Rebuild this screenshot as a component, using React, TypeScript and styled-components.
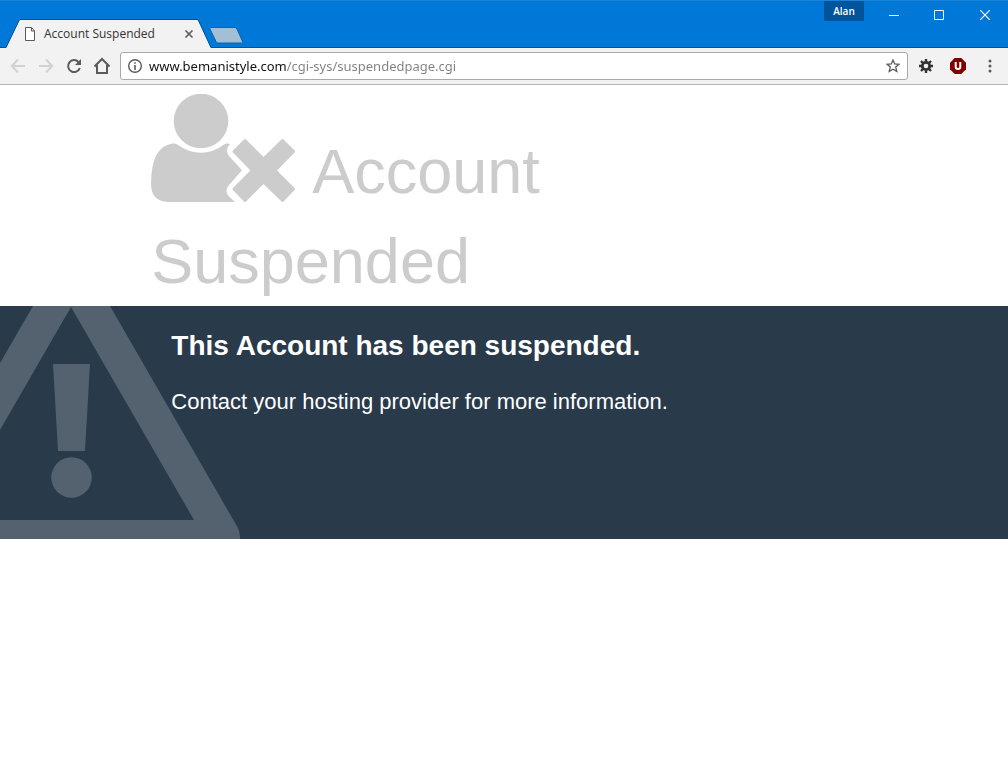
import React from "react";
import styled, { createGlobalStyle } from "styled-components";

const GlobalStyle = createGlobalStyle`
  *, *::before, *::after { box-sizing: border-box; }
  body {
    margin: 0;
    background: #fff;
    font-family: "Liberation Sans", Arial, sans-serif;
  }
`;

const uiFont = `"Open Sans", "Segoe UI", sans-serif`;

const TitleBar = styled.header`
  display: flex;
  justify-content: space-between;
  align-items: flex-start;
  height: 48px;
  background: #0078d7;
  border-top: 1px solid #1883d7;
  border-bottom: 1px solid #005499;
  font-family: ${uiFont};
`;

const TabStrip = styled.div`
  display: flex;
  align-items: flex-end;
  height: 47px;
  padding-left: 6px;
`;

const Tab = styled.div`
  position: relative;
  display: flex;
  align-items: center;
  width: 206px;
  height: 29px;
  padding: 0 16px 0 18px;
  color: #333;
  font-size: 12px;
  line-height: 16px;
`;

const TabShape = styled.svg`
  position: absolute;
  inset: 0;
  z-index: 0;
`;

const TabTitle = styled.span`
  position: relative;
  flex: 1;
  padding-left: 8px;
  white-space: nowrap;
`;

const IconButton = styled.button<{ $w?: number; $h?: number }>`
  position: relative;
  display: grid;
  place-items: center;
  flex: none;
  width: ${(p) => p.$w ?? 28}px;
  height: ${(p) => p.$h ?? 28}px;
  padding: 0;
  border: 0;
  background: none;
`;

const Glyph = styled.svg`
  position: relative;
  display: block;
  flex: none;
`;

const NewTab = styled(IconButton)`
  margin-bottom: 4px;
  margin-left: -4px;
`;

const WindowControls = styled.div`
  display: flex;
  align-items: flex-start;
`;

const Profile = styled.button`
  width: 40px;
  height: 20px;
  padding: 0;
  margin-right: 7px;
  border: 0;
  background: #00549a;
  color: #fff;
  font-family: ${uiFont};
  font-size: 10px;
  font-weight: 600;
  line-height: 20px;
`;

const Toolbar = styled.nav`
  display: flex;
  align-items: center;
  height: 37px;
  padding: 0 2px 0 4px;
  background: #f2f2f2;
  border-bottom: 1px solid #b6b6b6;
`;

const AddressBar = styled.label`
  display: flex;
  flex: 1;
  align-items: center;
  min-width: 0;
  height: 28px;
  margin: 0 2px 0 4px;
  padding-left: 7px;
  background: #fff;
  border: 1px solid #a9a9a9;
  border-radius: 3px;
`;

const AddressInput = styled.input`
  flex: 1;
  min-width: 0;
  height: 24px;
  margin-left: 7px;
  padding: 0;
  border: 0;
  outline: 0;
  background: linear-gradient(90deg, #111 138px, #808080 138px);
  background-clip: text;
  -webkit-background-clip: text;
  -webkit-text-fill-color: transparent;
  caret-color: #111;
  font-family: "Noto Sans", "Segoe UI", sans-serif;
  font-size: 13px;
  line-height: 24px;
`;

const Intro = styled.section`
  padding: 9px 15% 0;
`;

const Title = styled.h1`
  margin: 0;
  color: #ccc;
  font-size: 63px;
  font-weight: 400;
  line-height: 90px;
`;

const UserIcon = styled.svg`
  width: 144px;
  height: 108px;
  margin-right: 3px;
  vertical-align: -9px;
`;

const Banner = styled.section`
  position: relative;
  min-height: 233px;
  padding: 20px 15% 20px 17%;
  overflow: hidden;
  background: #293a4a;
  color: #fff;
`;

const WarningSign = styled.svg`
  position: absolute;
  left: 0;
  top: 0;
`;

const Heading = styled.h2`
  position: relative;
  margin: 0;
  font-size: 28px;
  line-height: 40px;
`;

const Message = styled.p`
  position: relative;
  margin: 20px 0 0;
  font-size: 22px;
  line-height: 32px;
`;

export default function App() {
  return (
    <>
      <GlobalStyle />
      <TitleBar>
        <TabStrip>
          <Tab>
            <TabShape width="206" height="29" aria-hidden="true">
              <path d="M0 29L13 2Q13.500 1 14.500 1H191Q192 1 192.500 2L205 29Z" fill="#f2f2f2" />
              <path d="M0 28.500L13 1.500Q13.300 .5 14.500 .5H191Q192 .5 192.500 1.500L205 28.500" fill="none" stroke="#00549a" />
            </TabShape>
            <Glyph width="12" height="14" viewBox="0 0 12 14" fill="#fff" stroke="#5a5a5a" aria-hidden="true">
              <path d="M1.500 .5H7.500L10.500 4V13.500H1.500Z M7.500 .5V4H10.500" />
            </Glyph>
            <TabTitle>Account Suspended</TabTitle>
            <IconButton $w={14} $h={14} aria-label="Close tab">
              <Glyph width="10" height="10" viewBox="0 0 10 10" stroke="#5a5a5a" strokeWidth="1.600">
                <path d="M1.500 1.500L8.500 8.500M8.500 1.500L1.500 8.500" />
              </Glyph>
            </IconButton>
          </Tab>
          <NewTab $w={36} $h={17} aria-label="New tab">
            <Glyph width="36" height="17" viewBox="0 0 36 17">
              <path d="M2.500 .5H27Q28.500 .5 29 2L34.500 14.500Q35 16 34 16H10Q8.500 16 8 14.500L2 2Q1.500 .5 2.500 .5Z" fill="#a4bed4" stroke="#0a64ae" />
            </Glyph>
          </NewTab>
        </TabStrip>
        <WindowControls>
          <Profile>Alan</Profile>
          <IconButton $w={45} aria-label="Minimize">
            <Glyph width="10" height="10"><path d="M0 5.500H10" stroke="#fff" /></Glyph>
          </IconButton>
          <IconButton $w={46} aria-label="Maximize">
            <Glyph width="10" height="10"><path d="M.5 .5H9.500V9.500H.5Z" fill="none" stroke="#fff" /></Glyph>
          </IconButton>
          <IconButton $w={46} aria-label="Close">
            <Glyph width="10" height="10"><path d="M0 0L10 10M10 0L0 10" stroke="#fff" strokeWidth="1.200" /></Glyph>
          </IconButton>
        </WindowControls>
      </TitleBar>
      <Toolbar>
        <IconButton aria-label="Back">
          <Glyph width="16" height="16" viewBox="0 0 16 16" fill="none" stroke="#d2d2d2" strokeWidth="2">
            <path d="M15 8H2M8 1.500L1.800 8L8 14.500" />
          </Glyph>
        </IconButton>
        <IconButton aria-label="Forward">
          <Glyph width="16" height="16" viewBox="0 0 16 16" fill="none" stroke="#d2d2d2" strokeWidth="2">
            <path d="M1 8H14M8 1.500L14.200 8L8 14.500" />
          </Glyph>
        </IconButton>
        <IconButton aria-label="Reload">
          <Glyph width="16" height="16" viewBox="0 0 16 16" fill="none" stroke="#5a5a5a" strokeWidth="2">
            <path d="M13.800 10A6 6 0 1 1 12.500 4" />
            <path d="M15 1V7H9Z" fill="#5a5a5a" stroke="none" />
          </Glyph>
        </IconButton>
        <IconButton aria-label="Home">
          <Glyph width="18" height="18" viewBox="0 0 18 18" fill="none" stroke="#5a5a5a" strokeWidth="2">
            <path d="M1.500 9.500L9 2L16.500 9.500M4 8V16H14V8" />
          </Glyph>
        </IconButton>
        <AddressBar>
          <Glyph width="14" height="14" viewBox="0 0 14 14" aria-hidden="true">
            <circle cx="7" cy="7" r="6.300" fill="none" stroke="#5a5a5a" strokeWidth="1.400" />
            <path d="M6.200 3.200H7.800V4.800H6.200ZM6.200 6H7.800V11H6.200Z" fill="#5a5a5a" />
          </Glyph>
          <AddressInput aria-label="Address" spellCheck={false} defaultValue="www.bemanistyle.com/cgi-sys/suspendedpage.cgi" />
          <IconButton aria-label="Bookmark this page">
            <Glyph width="14" height="14" viewBox="0 0 14 14" fill="none" stroke="#5a5a5a" strokeWidth="1.300">
              <path d="M7 1L8.700 5L13 5.300L9.700 8.100L10.800 12.500L7 10.200L3.200 12.500L4.300 8.100L1 5.300L5.300 5Z" />
            </Glyph>
          </IconButton>
        </AddressBar>
        <IconButton $w={32} aria-label="Settings extension">
          <Glyph width="14" height="14" viewBox="0 0 14 14" fill="none" stroke="#333">
            <circle cx="7" cy="7" r="3.700" strokeWidth="2.800" />
            <path d="M7 0V2.500M7 11.500V14M0 7H2.500M11.500 7H14M2 2L3.800 3.800M10.200 10.200L12 12M12 2L10.200 3.800M3.800 10.200L2 12" strokeWidth="2.400" />
          </Glyph>
        </IconButton>
        <IconButton $w={32} aria-label="uBlock">
          <Glyph width="16" height="16" viewBox="0 0 16 16">
            <path d="M4.700 0H11.300L16 4.700V11.300L11.300 16H4.700L0 11.300V4.700Z" fill="#800000" />
            <path d="M5.700 4V9Q5.700 11 8 11Q10.300 11 10.300 9V4" fill="none" stroke="#fff" strokeWidth="2" />
          </Glyph>
        </IconButton>
        <IconButton $w={32} aria-label="Menu">
          <Glyph width="4" height="14" viewBox="0 0 4 14" fill="#5a5a5a">
            <circle cx="2" cy="2" r="1.500" />
            <circle cx="2" cy="7" r="1.500" />
            <circle cx="2" cy="12" r="1.500" />
          </Glyph>
        </IconButton>
      </Toolbar>
      <main>
        <Intro>
          <Title>
            <UserIcon viewBox="0 0 144 108" fill="#ccc" aria-hidden="true">
              <circle cx="50" cy="27" r="27.300" />
              <path d="M22 49.500Q25 49 27 51Q38 58.800 50 58.800Q62 58.800 73 50.500Q76 49 79 50Q73.500 56 78 62L91 76.300L78 91Q73 97 78 102.500L84 108H17Q0 107 0 90Q0 52 22 49.500Z" />
              <path d="M94 46.500L112.500 65L131.500 46.500L142.500 57.500L124 76.500L142.500 95L131.500 106.500L112.500 88L94 106.500L83 95L101.500 76.500L83 57.500Z" stroke="#ccc" strokeWidth="3" strokeLinejoin="round" />
            </UserIcon>{" "}
            Account Suspended
          </Title>
        </Intro>
        <Banner>
          <WarningSign width="240" height="233" viewBox="0 0 240 233" fill="#54616e" aria-hidden="true">
            <path d="M33 0H110L238 222Q240 226 240 233H0V214H194L71 1L0 124V57Z" />
            <path d="M53 58H90L85 145H58Z" />
            <circle cx="71.500" cy="171.500" r="20.300" />
          </WarningSign>
          <Heading>This Account has been suspended.</Heading>
          <Message>Contact your hosting provider for more information.</Message>
        </Banner>
      </main>
    </>
  );
}
